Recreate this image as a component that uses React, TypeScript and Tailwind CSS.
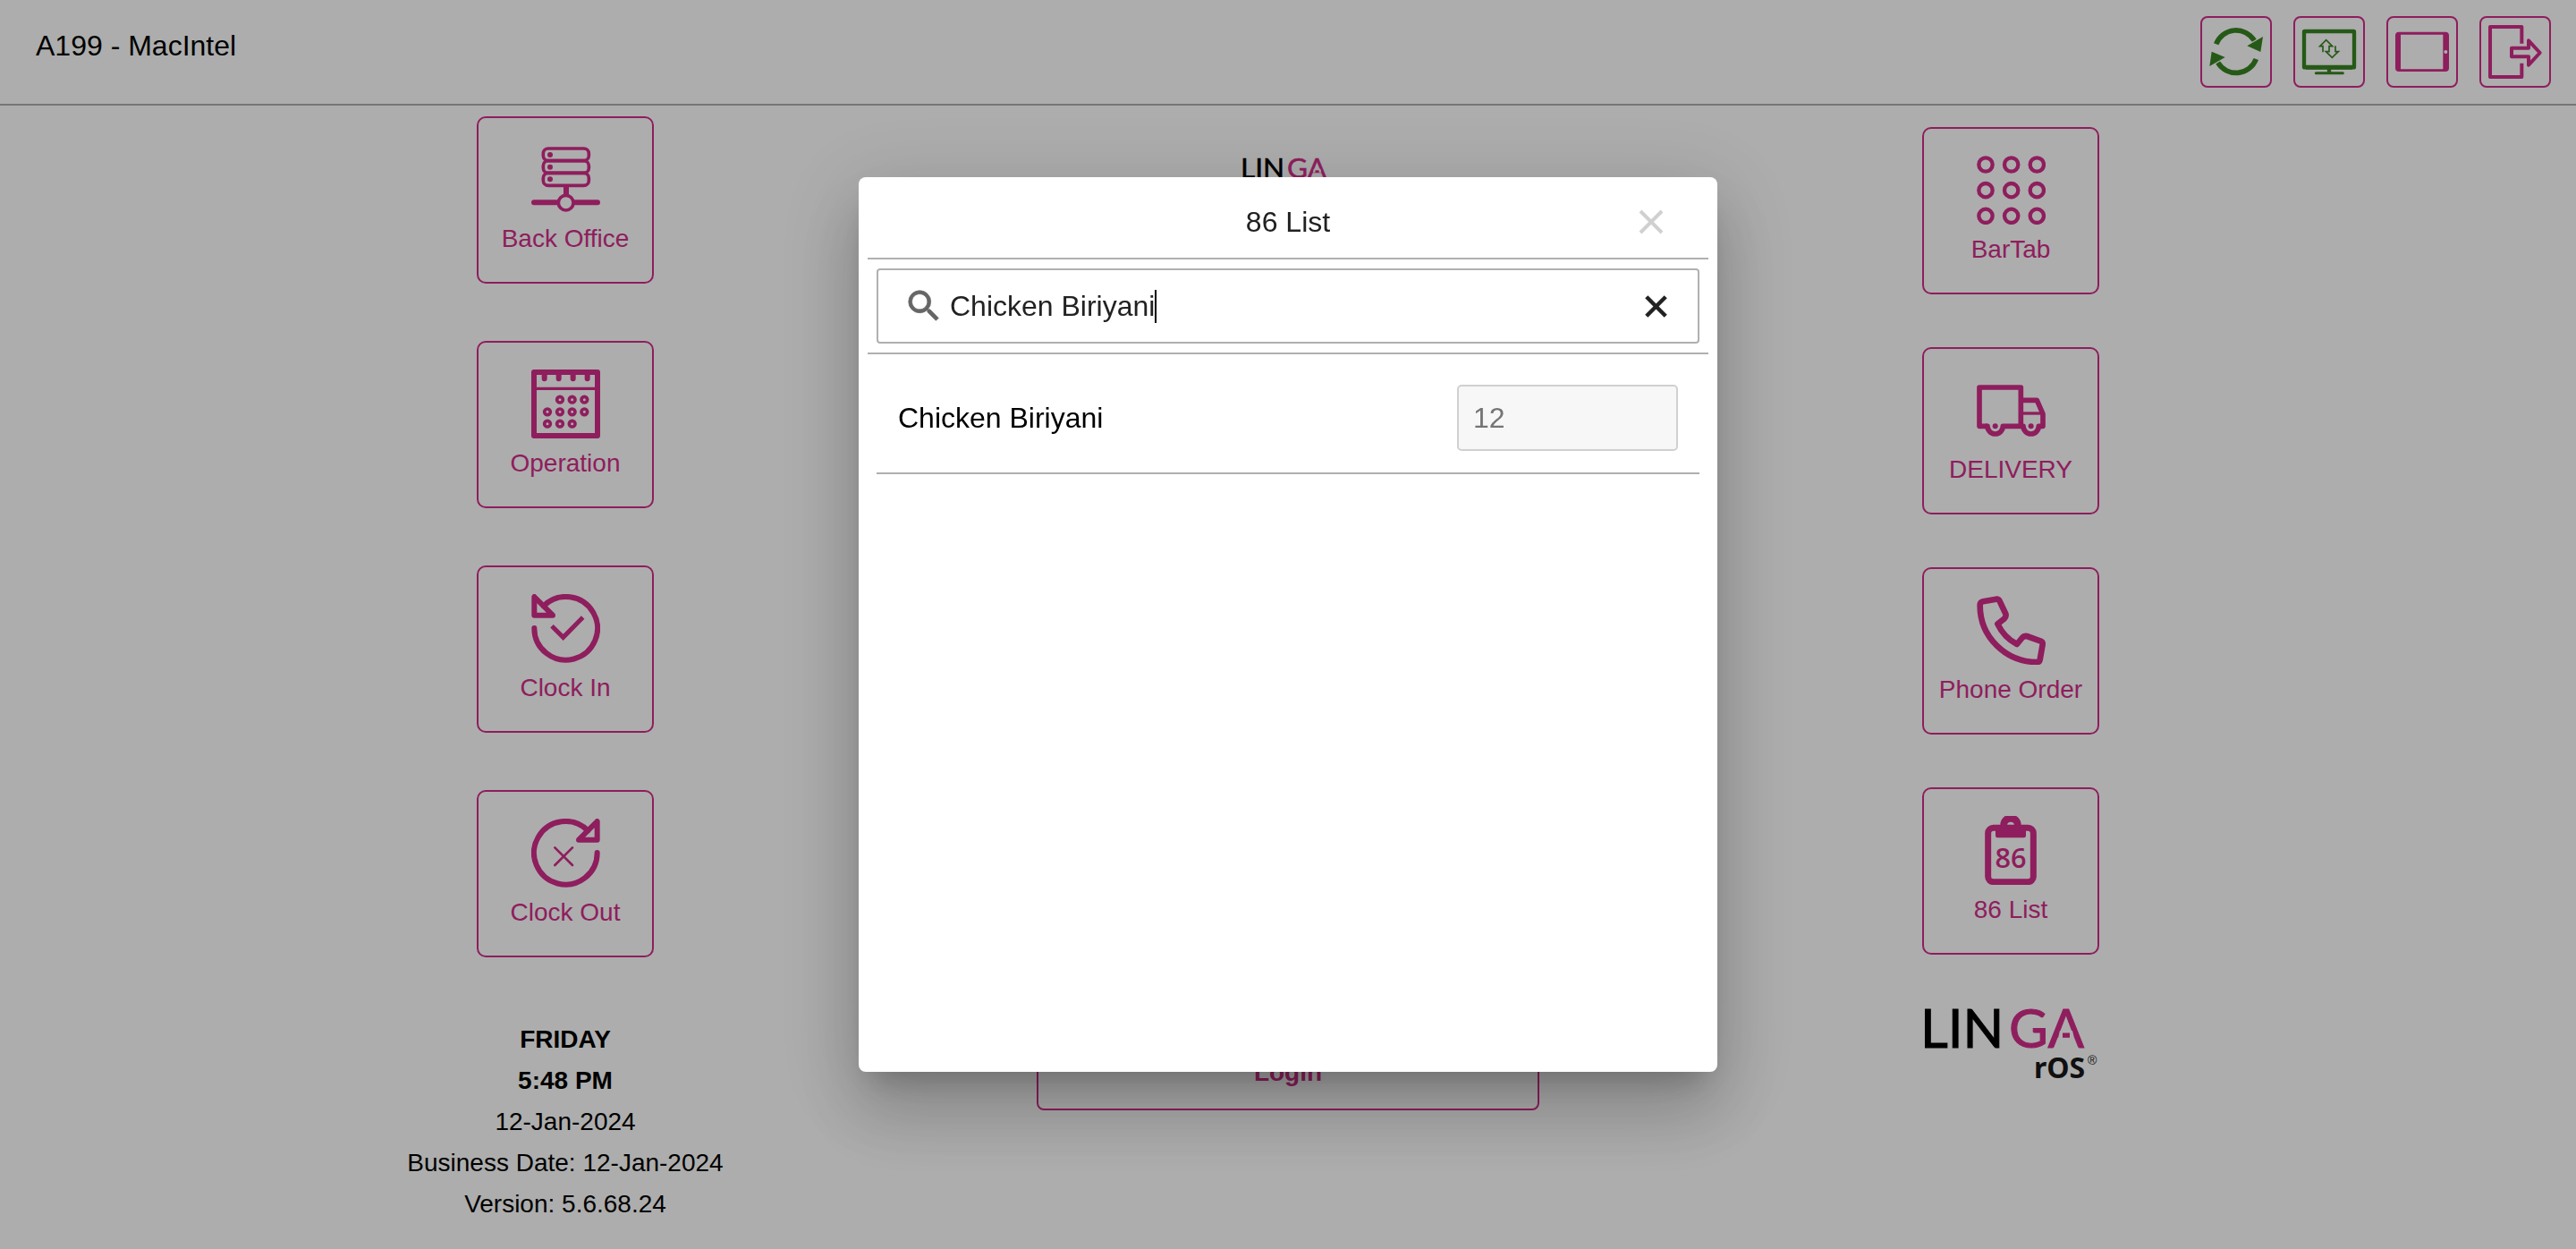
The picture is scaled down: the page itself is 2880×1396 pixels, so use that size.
import { useState, type ReactNode } from "react";

function IconFrame({ children, label, green = false }: { children: ReactNode; label: string; green?: boolean }) {
  return (
    <button
      type="button"
      aria-label={label}
      className={
        green
          ? "size-20 rounded-lg border-2 border-[#d22d8a] text-[#398323]"
          : "size-20 rounded-lg border-2 border-[#d22d8a] text-[#d22d8a]"
      }
    >
      <svg viewBox="6 6 228 228" className="size-full" fill="none" stroke="currentColor">
        {children}
      </svg>
    </button>
  );
}

function Tile({ label, children }: { label: string; children: ReactNode }) {
  return (
    <button
      type="button"
      className="flex w-[198px] flex-col items-center rounded-[10px] border-2 border-[#d22d8a] pt-[30px] pb-7 text-[#d22d8a]"
    >
      <svg viewBox="0 0 231 231" className="size-[77px]" fill="none" stroke="currentColor" aria-hidden="true">
        {children}
      </svg>
      <span className="mt-2 text-[28px] leading-10 whitespace-nowrap">{label}</span>
    </button>
  );
}

function Logo({ className }: { className: string }) {
  return (
    <svg viewBox="0 0 198 88" className={className} role="img" aria-label="LINGA rOS">
      <g fontFamily="Lato" fontSize="60" strokeWidth="1">
        <text x="-2" y="45" fill="#000" stroke="#000">
          LIN
        </text>
        <text x="97" y="45" fill="#d22d8a" stroke="#d22d8a">
          GA
        </text>
      </g>
      <path d="M154 26H157V34H152ZM165 26H168L170 34H165Z" fill="#fff" />
      <text x="125" y="79" fontFamily="Noto Sans" fontSize="32" fontWeight="700" fill="#181818">
        rOS
      </text>
      <text x="185" y="64" fontFamily="Liberation Sans" fontSize="14" fill="#181818">
        ®
      </text>
    </svg>
  );
}

function Cross({ width }: { width: number }) {
  return (
    <svg viewBox="0 0 28 28" className="size-full" stroke="currentColor" strokeWidth={width} aria-hidden="true">
      <path d="M2 2L26 26M26 2L2 26" />
    </svg>
  );
}

const calendarDots = [
  [96, 101], [137, 101], [178, 101],
  [54, 142], [96, 142], [137, 142], [178, 142],
  [54, 182], [96, 182], [137, 182],
];
const grid = [30, 116, 202];

export default function App() {
  const [query, setQuery] = useState("Chicken Biriyani");

  return (
    <div className="min-h-screen bg-white font-['Liberation_Sans',Arial,sans-serif] text-black">
      <header className="flex items-start justify-between border-b-2 border-[#aeaeae] py-[18px] pr-7 pl-10">
        <h1 className="text-[32px] leading-[66px]">A199 - MacIntel</h1>
        <nav className="flex gap-6">
          <IconFrame label="Refresh" green>
            <path d="M53 94A71.5 71.5 0 0 1 181 82M187 144A71.5 71.5 0 0 1 59 156" strokeWidth="17" />
            <path d="M210 69L202 120L157 100ZM38 119L83 138L31 168Z" fill="currentColor" stroke="none" />
          </IconFrame>
          <IconFrame label="Display sync" green>
            <rect x="36" y="51" width="168" height="121" rx="2" strokeWidth="13" />
            <path d="M42 172H198" strokeWidth="15" />
            <path d="M120 176V190" strokeWidth="13" />
            <path d="M76 191H166" strokeWidth="9" strokeLinecap="round" />
            <path d="M99 121V101H89L110 80L131 101H120V113M141 100V119H151L130 139L109 119H120V108" strokeWidth="5" />
          </IconFrame>
          <IconFrame label="Tablet">
            <path
              d="M42 53H198A12 12 0 0 1 210 65V174A12 12 0 0 1 198 186H42A12 12 0 0 1 30 174V65A12 12 0 0 1 42 53ZM48 62V178H190V62ZM205 120A6 6 0 1 0 193 120A6 6 0 1 0 205 120Z"
              fill="currentColor"
              fillRule="evenodd"
              stroke="none"
            />
          </IconFrame>
          <IconFrame label="Exit">
            <path d="M142 92V36H36V204H142V158" strokeWidth="12" strokeLinejoin="round" />
            <path d="M108 107H165V82L203 123L165 164V136H108Z" strokeWidth="12" strokeLinejoin="round" />
          </IconFrame>
        </nav>
      </header>

      <main className="grid grid-cols-3 px-57">
        <section className="flex flex-col items-center gap-16 pt-3">
          <Tile label="Back Office">
            <g strokeWidth="11">
              <rect x="40" y="12" width="153" height="41" rx="17" />
              <rect x="40" y="53" width="153" height="41" rx="17" />
              <rect x="40" y="94" width="153" height="42" rx="17" />
              <circle cx="116" cy="194" r="25" />
            </g>
            <g fill="currentColor" stroke="none">
              <circle cx="63" cy="33" r="9" />
              <circle cx="63" cy="74" r="9" />
              <circle cx="63" cy="115" r="9" />
            </g>
            <path d="M117 138V168" strokeWidth="18" />
            <path d="M9 193H84M148 193H222" strokeWidth="18" strokeLinecap="round" />
          </Tile>
          <Tile label="Operation">
            <rect x="9" y="9" width="213" height="213" strokeWidth="18" strokeLinejoin="round" />
            <path d="M14 64H218" strokeWidth="10" />
            <path d="M44 12V31M92 12V31M140 12V31M188 12V31" strokeWidth="18" strokeLinecap="round" />
            {calendarDots.map(([x, y]) => (
              <circle key={`${x}-${y}`} cx={x} cy={y} r="10" strokeWidth="11" />
            ))}
          </Tile>
          <Tile label="Clock In">
            <path d="M10 114A106 106 0 1 0 41 40" strokeWidth="18" strokeLinecap="round" />
            <path d="M10 9V71H72Z" strokeWidth="18" strokeLinejoin="round" />
            <path d="M69 107L107 145L173 78" strokeWidth="15" />
          </Tile>
          <Tile label="Clock Out">
            <path d="M221 114A106 106 0 1 1 190 40" strokeWidth="18" strokeLinecap="round" />
            <path d="M221 9V71H159Z" strokeWidth="18" strokeLinejoin="round" />
            <path d="M79 97L138 156M138 97L79 156" strokeWidth="8" strokeLinecap="round" />
          </Tile>
          <div className="pt-[5px] text-center text-[28px] leading-[46px]">
            <p className="font-bold">FRIDAY</p>
            <p className="font-bold">5:48 PM</p>
            <p>12-Jan-2024</p>
            <p>Business Date: 12-Jan-2024</p>
            <p>Version: 5.6.68.24</p>
          </div>
        </section>

        <section className="flex flex-col items-center pt-[57px]">
          <Logo className="w-[104px]" />
          <button
            type="button"
            className="mt-auto mb-32 h-[85px] w-[562px] rounded-lg border-2 border-[#d22d8a] text-[28px] font-bold text-[#d22d8a]"
          >
            Login
          </button>
        </section>

        <section className="flex flex-col items-center gap-[59px] pt-6">
          <Tile label="BarTab">
            {grid.map((y) => grid.map((x) => <circle key={`${x}-${y}`} cx={x} cy={y} r="23" strokeWidth="13" />))}
          </Tile>
          <Tile label="DELIVERY">
            <path d="M36 169H9V39H148V169" strokeWidth="17" strokeLinejoin="round" />
            <path d="M30 169H36A26 26 0 0 0 88 169H156A26 26 0 0 0 208 169H222V128L202 82H152" strokeWidth="17" strokeLinejoin="round" />
            <path d="M152 126H218" strokeWidth="10" />
            <g fill="currentColor" stroke="none">
              <circle cx="62" cy="169" r="9" />
              <circle cx="182" cy="169" r="9" />
            </g>
          </Tile>
          <Tile label="Phone Order">
            <path
              d="M21 19L65 11Q73 10 76 16L97 60Q100 70 92 77L70 94Q92 140 135 162L152 141Q159 133 168 135L215 152Q222 155 221 163L212 214Q210 222 202 222C100 222 11 140 11 32Q11 21 21 19Z"
              strokeWidth="20"
              strokeLinejoin="round"
            />
          </Tile>
          <Tile label="86 List">
            <rect x="38" y="40" width="152" height="181" rx="18" strokeWidth="21" />
            <path
              d="M63 30H79A35 35 0 0 1 149 30H165V66Q165 73 158 73H70Q63 73 63 66ZM126 32A12 12 0 1 0 102 32A12 12 0 1 0 126 32Z"
              fill="currentColor"
              fillRule="evenodd"
              stroke="none"
            />
            <text x="114" y="173" textAnchor="middle" fontFamily="Open Sans" fontSize="92" fontWeight="600" fill="currentColor" stroke="none">
              86
            </text>
          </Tile>
          <Logo className="w-[198px]" />
        </section>
      </main>

      <div className="fixed inset-0 flex items-center justify-center bg-black/32">
        <div
          role="dialog"
          aria-modal="true"
          aria-labelledby="list-title"
          className="h-[1000px] max-h-full w-1/3 rounded-lg bg-white p-[10px] text-[32px] shadow-[0_22px_30px_-14px_rgba(0,0,0,0.2),0_48px_76px_6px_rgba(0,0,0,0.14),0_18px_92px_16px_rgba(0,0,0,0.12)]"
        >
          <div className="grid h-[82px] grid-cols-[1fr_auto_1fr] items-center border-b-2 border-[#b0b0b0]">
            <h2 id="list-title" className="col-start-2 text-[#212121]">
              86 List
            </h2>
            <button type="button" aria-label="Close" className="mr-[50px] size-7 justify-self-end text-[#d0d0d0]">
              <Cross width={4} />
            </button>
          </div>

          <div className="border-b-2 border-[#b0b0b0] p-[10px]">
            <div className="flex h-[84px] items-center rounded border-2 border-[#b0b0b0] pr-[34px] pl-7">
              <svg viewBox="0 0 24 24" className="size-[46px] text-[#666666]" fill="currentColor" stroke="currentColor" strokeWidth="0.4" aria-hidden="true">
                <path d="M15.5 14h-.79l-.28-.27A6.471 6.471 0 0 0 16 9.5 6.5 6.5 0 1 0 9.5 16c1.61 0 3.09-.59 4.23-1.57l.27.28v.79l5 4.99L20.49 19l-4.99-5zm-6 0C7.01 14 5 11.99 5 9.5S7.01 5 9.5 5 14 7.01 14 9.5 11.99 14 9.5 14z" />
              </svg>
              <input
                type="text"
                aria-label="Search items"
                value={query}
                onChange={(e) => setQuery(e.target.value)}
                className="ml-1.5 field-sizing-content text-[#222222] caret-transparent outline-none"
              />
              <span className="h-[37px] w-[2px] bg-black" aria-hidden="true" />
              <button type="button" aria-label="Clear search" onClick={() => setQuery("")} className="ml-auto size-[25px] text-[#222222]">
                <Cross width={5} />
              </button>
            </div>
          </div>

          <ul className="px-[10px]">
            <li className="flex items-center justify-between border-b-2 border-[#b0b0b0] px-6 pt-[34px] pb-6">
              <label htmlFor="item-count">Chicken Biriyani</label>
              <input
                id="item-count"
                type="text"
                defaultValue="12"
                disabled
                className="h-[74px] w-[247px] rounded-[5px] border-2 border-[#d0d0d0] bg-[#f7f7f7] px-4 text-[#757575]"
              />
            </li>
          </ul>
        </div>
      </div>
    </div>
  );
}
